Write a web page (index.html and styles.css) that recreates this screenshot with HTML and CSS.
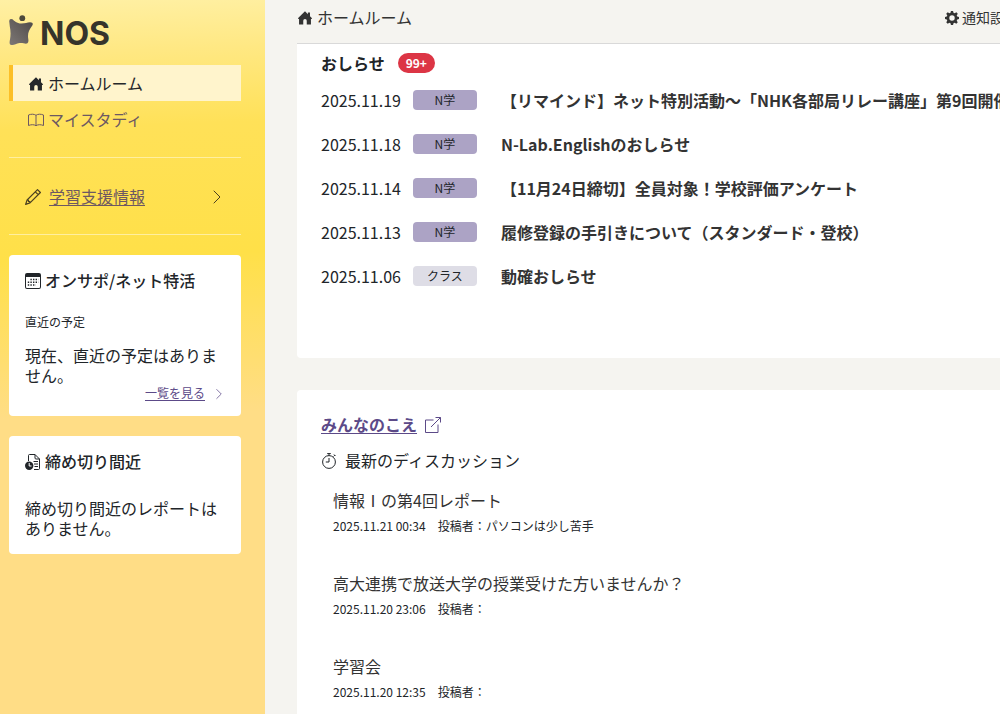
FILE: index.html
```html
<!DOCTYPE html>
<html lang="ja">
<head>
<meta charset="utf-8">
<meta name="viewport" content="width=device-width, initial-scale=1">
<title>ホームルーム</title>
<link rel="stylesheet" href="styles.css">
</head>
<body>
<svg class="sprite" aria-hidden="true">
  <symbol id="house" viewBox="0 0 16 16"><path d="M8 .4 11.300 3.600V1.800h2.400v4.200L15.800 8v1.200h-1v6.300H10V11a2 2 0 0 0-4 0v4.500H1.200V9.200h-1V8z"/></symbol>
  <symbol id="chevron" viewBox="0 0 16 16"><path fill="none" stroke="currentColor" stroke-linecap="round" stroke-linejoin="round" d="m5 2 6 6-6 6"/></symbol>
</svg>
<div class="page">
  <aside class="sidebar">
    <div class="logo">
      <svg class="logo-mark" viewBox="0 0 24 31" aria-hidden="true">
        <defs><linearGradient id="mark" x1="0" y1="1" x2="1" y2="0"><stop offset="0" stop-color="#7d7876"/><stop offset=".5" stop-color="#66615f"/><stop offset="1" stop-color="#4b4848"/></linearGradient></defs>
        <circle cx="13.300" cy="3.200" r="2.900" fill="#4d493c"/>
        <path fill="url(#mark)" d="M.2 6Q.5 3 3.500 4.300C5.500 6 7.500 8.500 12.500 8.600c4 0 5.500-1.300 8.500-1.300 2.800 0 3.300 1.700 2.300 3.200C20.500 14.500 19 17 19 21c0 3 1 4.500 0 6.500-1.500 2.500-4.500 0-8.500.5C7 28.500 5 30.500 2.500 30 0 29.500.5 27 1 24.500 2 19 1.500 15 .8 11.500z"/>
      </svg>
      <span class="logo-text">NOS</span>
    </div>
    <nav class="nav">
      <a class="nav-item current" href="#"><svg class="icon small"><use href="#house"/></svg>ホームルーム</a>
      <a class="nav-item" href="#"><svg class="icon" viewBox="0 0 16 16"><path fill="none" stroke="currentColor" d="M8 3.300C6 1.800 3 2 .5 3v10.500c2.500-1 5.500-1.200 7.500.2 2-1.400 5-1.200 7.500-.2V3C13 2 10 1.800 8 3.300zv10.400"/></svg>マイスタディ</a>
    </nav>
    <div class="support">
      <svg class="icon" viewBox="0 0 16 16"><path fill="none" stroke="currentColor" stroke-width="1.200" stroke-linejoin="round" d="M12.500.6 15.400 3.500 5 13.900.6 15.400 2.100 11zM10.300 2.800l2.900 2.900M2.100 11l1.400.3v1.200h1.200l.3 1.400"/></svg>
      <a href="#">学習支援情報</a>
      <svg class="icon arrow"><use href="#chevron"/></svg>
    </div>
    <section class="card">
      <h2><svg class="icon" viewBox="0 0 16 16"><path d="M2 0h12a2 2 0 0 1 2 2v12a2 2 0 0 1-2 2H2a2 2 0 0 1-2-2V2a2 2 0 0 1 2-2zM1 4v10a1 1 0 0 0 1 1h12a1 1 0 0 0 1-1V4z" fill-rule="evenodd"/><path fill="none" stroke="currentColor" stroke-width="1.400" stroke-dasharray="1.400 1.200" d="M5.400 6.500h8M2.800 9.200h10.600M2.800 12h8"/></svg>オンサポ/ネット特活</h2>
      <p class="caption">直近の予定</p>
      <p>現在、直近の予定はありません。</p>
      <div class="more"><a href="#">一覧を見る</a><svg class="icon tiny"><use href="#chevron"/></svg></div>
    </section>
    <section class="card deadline">
      <h2><svg class="icon" viewBox="0 0 16 16"><path fill="none" stroke="currentColor" d="M3.500 7V1.500q0-1 1-1H10L14.500 5v9.500q0 1-1 1H9M10 .5V4q0 1 1 1h3.500M8.500 7.500H13M9 10h4M9.500 12.500H13"/><circle cx="4.200" cy="11.700" r="4.200"/><path fill="none" stroke="#fff" d="M4.200 9v3h2.300"/></svg>締め切り間近</h2>
      <p>締め切り間近のレポートはありません。</p>
    </section>
  </aside>
  <main class="main">
    <header class="topbar">
      <h1><svg class="icon small"><use href="#house"/></svg>ホームルーム</h1>
      <a class="settings" href="#"><svg class="icon small" viewBox="0 0 16 16"><path fill-rule="evenodd" d="M6.800 0h2.400l.5 2.100 1.300.6 2-1.200L14.600 3.100l-1.200 1.900.6 1.300 2 .5v2.400l-2 .5-.6 1.300 1.200 1.900-1.700 1.700-1.900-1.200-1.300.5L9.200 16H6.800l-.5-2.100-1.300-.5-1.900 1.200-1.700-1.700L2.600 11 2 9.700 0 9.200V6.800l2-.5L2.600 5 1.400 3.100 3.100 1.400 5 2.700l1.300-.6zM8 4.900a3.100 3.100 0 1 0 0 6.200 3.100 3.100 0 0 0 0-6.200z"/></svg>通知設定</a>
    </header>
    <section class="panel news">
      <h2>おしらせ<span class="badge">99+</span></h2>
      <ul>
        <li><time>2025.11.19</time><span class="tag">N学</span><a href="#">【リマインド】ネット特別活動～「NHK各部局リレー講座」第9回開催</a></li>
        <li><time>2025.11.18</time><span class="tag">N学</span><a href="#">N-Lab.Englishのおしらせ</a></li>
        <li><time>2025.11.14</time><span class="tag">N学</span><a href="#">【11月24日締切】全員対象！学校評価アンケート</a></li>
        <li><time>2025.11.13</time><span class="tag">N学</span><a href="#">履修登録の手引きについて（スタンダード・登校）</a></li>
        <li><time>2025.11.06</time><span class="tag class-tag">クラス</span><a href="#">動確おしらせ</a></li>
      </ul>
    </section>
    <section class="panel voices">
      <h2><a href="#">みんなのこえ</a><svg class="icon" viewBox="0 0 16 16"><path fill="none" stroke="currentColor" d="M8.500 3H.5v12.500H13V7.500M10.500.5h5v5M15.500.5 6 10"/></svg></h2>
      <h3><svg class="icon" viewBox="0 0 16 16"><path fill="none" stroke="currentColor" d="M6.200.6h3.600M8 .6v2M12.500 3.500l1.300-1.300M13 1.500l1.500 1.500M8 5v4H4.800"/><circle cx="8" cy="9" r="6.400" fill="none" stroke="currentColor"/></svg>最新のディスカッション</h3>
      <article><a href="#">情報Ⅰの第4回レポート</a><p>2025.11.21 00:34<span>投稿者：パソコンは少し苦手</span></p></article>
      <article><a href="#">高大連携で放送大学の授業受けた方いませんか？</a><p>2025.11.20 23:06<span>投稿者：</span></p></article>
      <article><a href="#">学習会</a><p>2025.11.20 12:35<span>投稿者：</span></p></article>
    </section>
  </main>
</div>
</body>
</html>
```

FILE: styles.css
```css
* { box-sizing: border-box; }
body {
  margin: 0;
  overflow-x: hidden;
  background: #f5f4f0;
  color: #212529;
  font: 16px/20px "Noto Sans CJK JP", sans-serif;
}
h1, h2, h3, p, ul { margin: 0; padding: 0; font-size: 16px; }
h1, h3 { font-weight: 400; }
h2 { font-weight: 500; }
ul { list-style: none; }
a { color: #333; text-decoration: none; }
.sprite { display: none; }
.icon { width: 16px; height: 16px; margin-top: 2px; flex: none; fill: currentColor; }
.icon.small { width: 14px; height: 14px; }
.icon.tiny { width: 12px; height: 12px; }

.page {
  display: grid;
  grid-template-columns: 265px minmax(753px, 1fr);
  min-height: 100vh;
}

.sidebar {
  padding: 14px 24px 24px 9px;
  background: linear-gradient(178deg, #fff0a4 0, #ffe883 55px, #ffe158 130px, #ffe048 260px, #ffdd86 420px);
}
.logo { display: flex; align-items: center; gap: 7px; height: 33px; }
.logo-mark { width: 24px; height: 31px; }
.logo-text { padding-top: 6px; color: #36342b; font: 700 32px/32px Inter, sans-serif; }
.nav { margin-top: 18px; padding-bottom: 20px; border-bottom: 1px solid #ffefa0; }
.nav-item {
  display: flex;
  align-items: center;
  gap: 4px;
  height: 36px;
  padding-left: 15px;
  border-left: 4px solid transparent;
  color: #6d5862;
}
.nav-item .small, .topbar h1 .small { margin-left: 1px; margin-right: 1px; }
.nav-item.current { border-color: #fcbf26; background: #fff4cc; color: #25272a; }
.support {
  display: flex;
  align-items: center;
  gap: 8px;
  height: 77px;
  padding: 0 16px;
  border-bottom: 1px solid #ffefa0;
  color: #4b4020;
}
.support a { color: #6d5862; text-decoration: underline; text-underline-offset: 2px; }
.support .arrow { margin-left: auto; }
.card {
  margin-top: 20px;
  padding: 15px 16px;
  border-radius: 4px;
  background: #fff;
}
.card h2 { display: flex; align-items: center; gap: 4px; }
.card .caption { margin: 22px 0 13px; font-size: 12px; }
.more { display: flex; align-items: center; justify-content: flex-end; gap: 8px; font-size: 12px; line-height: 16px; color: #5c4a88; }
.more a { color: #5c4a88; text-decoration: underline; text-underline-offset: 2px; }
.deadline p { margin: 27px 0 1px; }

.main { padding-left: 32px; }
.topbar {
  display: flex;
  justify-content: space-between;
  padding: 7px 0 16px;
  border-bottom: 1px solid #d9d9d9;
}
.topbar h1, .settings { display: flex; align-items: center; gap: 4px; color: #333; }
.settings { gap: 3px; font-size: 14px; white-space: nowrap; }
.panel { padding: 24px 24px 48px; border-radius: 4px; background: #fff; }
.news { padding: 9px 0 60px 24px; border-radius: 0 0 4px 4px; }
.news h2 { display: flex; align-items: center; gap: 13px; margin-bottom: 5px; font-weight: 700; }
.badge {
  padding: 0 8px;
  border-radius: 10px;
  background: #dc3545;
  color: #fff;
  font-size: 12px;
  font-weight: 700;
}
.news li { display: flex; align-items: center; height: 44px; white-space: nowrap; }
.news li a { font-weight: 700; }
.tag {
  width: 64px;
  margin: 0 24px 0 12px;
  border-radius: 4px;
  background: #aca3c5;
  font-size: 12px;
  text-align: center;
}
.class-tag { background: #dedde6; }
.voices { margin-top: 32px; }
.voices h2 { display: flex; align-items: center; gap: 8px; font-weight: 700; color: #5c4a88; }
.voices h2 a { color: #5c4a88; text-decoration: underline; text-underline-offset: 2px; }
.voices h3 { display: flex; align-items: center; gap: 8px; margin: 16px 0 20px; }
article { height: 83px; padding-left: 12px; }
article a { display: block; margin-bottom: 8px; }
article p { font-size: 12px; line-height: 16px; }
article span { margin-left: 12px; }
```
